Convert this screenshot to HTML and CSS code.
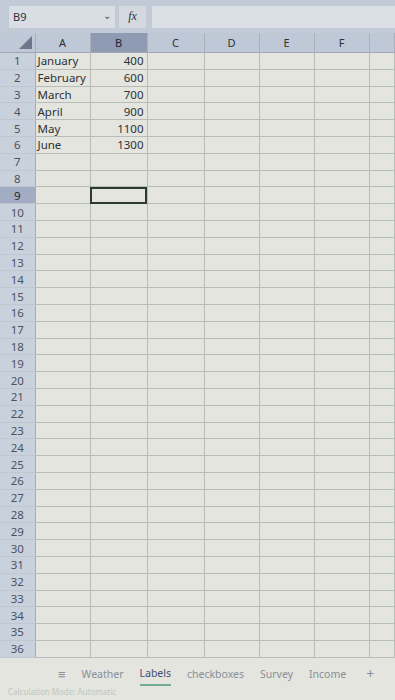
FILE: index.html
```html
<!DOCTYPE html>
<html lang="en">
<head>
  <meta charset="UTF-8" />
  <meta name="viewport" content="width=device-width, initial-scale=1.0" />
  <title>Sheet</title>
  <link rel="stylesheet" href="styles.css">
</head>
<body>
  <div class="formula-bar">
    <div class="name-box">B9 <span class="caret">&#8964;</span></div>
    <div class="fx">fx</div>
    <div class="formula-input"></div>
  </div>

  <table class="sheet">
    <colgroup>
      <col class="c-head"><col class="c-a"><col class="c-b"><col class="c-c">
      <col class="c-d"><col class="c-e"><col class="c-f"><col>
    </colgroup>
    <thead>
      <tr>
        <th class="corner"><span class="tri"></span></th>
        <th>A</th><th class="sel">B</th><th>C</th><th>D</th><th>E</th><th>F</th><th></th>
      </tr>
    </thead>
    <tbody id="rows"></tbody>
  </table>

  <div class="tabs">
    <span class="menu">&#8801;</span>
    <span class="tab">Weather</span>
    <span class="tab active">Labels</span>
    <span class="tab">checkboxes</span>
    <span class="tab">Survey</span>
    <span class="tab">Income</span>
    <span class="plus">+</span>
  </div>
  <div class="status">Calculation Mode: Automatic</div>

  <script>
    const data = [
      ['January', 400], ['February', 600], ['March', 700],
      ['April', 900], ['May', 1100], ['June', 1300]
    ];
    const body = document.getElementById('rows');
    for (let r = 1; r <= 36; r++) {
      const tr = document.createElement('tr');
      const row = data[r - 1] || ['', ''];
      tr.innerHTML =
        `<th class="${r === 9 ? 'sel' : ''}">${r}</th>` +
        `<td>${row[0]}</td>` +
        `<td class="num${r === 9 ? ' active' : ''}">${row[1]}</td>` +
        '<td></td><td></td><td></td><td></td><td></td>';
      body.appendChild(tr);
    }
  </script>
</body>
</html>
```

FILE: styles.css
```css
body {
  margin: 0;
  background: #e3e5de;
  font-family: 'Noto Sans', 'Open Sans', sans-serif;
  color: #2e3138;
  width: 395px;
  height: 700px;
  overflow: hidden;
}

.formula-bar {
  display: flex;
  align-items: center;
  gap: 4px;
  height: 33px;
  padding-left: 9px;
  background: #c3cad7;
  box-sizing: border-box;
}

.name-box {
  width: 106px;
  height: 22px;
  background: #d9dde4;
  display: flex;
  align-items: center;
  justify-content: space-between;
  padding: 0 4px;
  box-sizing: border-box;
  font-size: 11px;
}

.caret {
  font-size: 10px;
  color: #555;
  line-height: 6px;
  margin-top: -4px;
}

.fx {
  width: 27px;
  height: 22px;
  background: #d4d9e0;
  font-family: 'Liberation Serif', serif;
  font-style: italic;
  font-size: 12px;
  display: flex;
  align-items: center;
  justify-content: center;
}

.formula-input {
  flex: 1;
  height: 22px;
  margin-left: 2px;
  background: #dadee5;
}

.sheet {
  border-collapse: collapse;
  table-layout: fixed;
  width: 395px;
  font-size: 11.5px;
}

.c-head { width: 35px; }
.c-a { width: 55px; }
.c-b { width: 57px; }
.c-c { width: 57px; }
.c-d { width: 55px; }
.c-e { width: 55px; }
.c-f { width: 55px; }

.sheet thead th {
  height: 19px;
  background: #bfc8d6;
  font-weight: normal;
  font-size: 11px;
  border-right: 1px solid #a9b1bf;
  border-bottom: 1px solid #9ea7b6;
  padding: 0;
}

.sheet thead th.sel {
  background: #8f9bb3;
  color: #1f2430;
}

.corner {
  position: relative;
}

.tri {
  position: absolute;
  right: 3px;
  bottom: 3px;
  border-left: 13px solid transparent;
  border-bottom: 13px solid #6d7789;
}

.sheet tbody tr {
  height: 16.8px;
}

.sheet tbody th,
.sheet td {
  height: 15.8px;
  line-height: 15px;
  padding: 0;
}

.sheet tbody th {
  background: #c9d1dc;
  font-weight: normal;
  font-size: 11.5px;
  color: #4c5260;
  border-right: 1px solid #a4acb8;
  border-bottom: 1px solid #c0c7d1;
  text-align: center;
}

.sheet tbody th.sel {
  background: #a2adc3;
  color: #1f2430;
}

.sheet td {
  padding: 0 2px;
  border-right: 1px solid #b8bcb7;
  border-bottom: 1px solid #b8bcb7;
  white-space: nowrap;
  overflow: hidden;
}

.sheet td.num {
  text-align: right;
  padding-right: 3px;
}

.sheet td.active {
  outline: 2px solid #2d3a30;
  outline-offset: -2px;
  position: relative;
}

.sheet td.active::after {
  content: '';
  position: absolute;
  right: -2px;
  bottom: -2px;
  width: 4px;
  height: 4px;
  background: #2d3a30;
}

.tabs {
  display: flex;
  align-items: center;
  height: 26px;
  margin-top: 3px;
  padding-left: 58px;
  gap: 16px;
  font-size: 10.5px;
  color: #8a8f9b;
}

.menu {
  font-size: 13px;
}

.tab {
  padding: 4px 0;
}

.tab.active {
  color: #3e4f73;
  border-bottom: 2px solid #6fae92;
}

.plus {
  font-size: 14px;
  margin-left: 4px;
}

.status {
  padding-left: 8px;
  font-size: 8px;
  line-height: 10px;
  color: #c2c5c2;
}
```
